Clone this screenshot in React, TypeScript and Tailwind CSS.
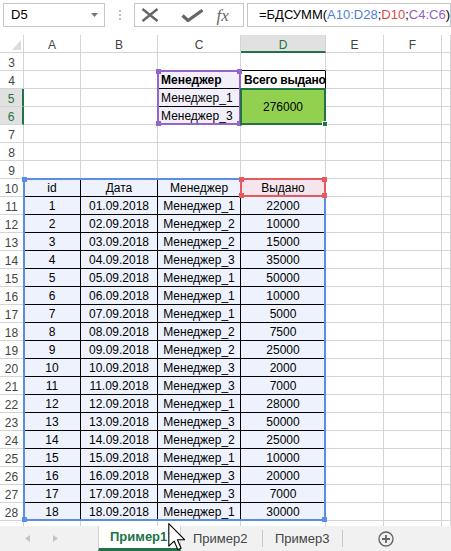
import React from "react";

const rows: [number, string, string, number][] = [
  [1, "01.09.2018", "Менеджер_1", 22000],
  [2, "02.09.2018", "Менеджер_2", 10000],
  [3, "03.09.2018", "Менеджер_2", 15000],
  [4, "04.09.2018", "Менеджер_3", 35000],
  [5, "05.09.2018", "Менеджер_1", 50000],
  [6, "06.09.2018", "Менеджер_1", 10000],
  [7, "07.09.2018", "Менеджер_1", 5000],
  [8, "08.09.2018", "Менеджер_2", 7500],
  [9, "09.09.2018", "Менеджер_2", 25000],
  [10, "10.09.2018", "Менеджер_3", 2000],
  [11, "11.09.2018", "Менеджер_3", 7000],
  [12, "12.09.2018", "Менеджер_1", 28000],
  [13, "13.09.2018", "Менеджер_3", 50000],
  [14, "14.09.2018", "Менеджер_2", 25000],
  [15, "15.09.2018", "Менеджер_1", 10000],
  [16, "16.09.2018", "Менеджер_3", 20000],
  [17, "17.09.2018", "Менеджер_3", 7000],
  [18, "18.09.2018", "Менеджер_1", 30000],
];

const letters = ["A", "B", "C", "D", "E", "F", ""];

const base =
  "border-r border-b px-[3px] pt-[2px] leading-[15px] whitespace-nowrap text-[12px] text-black";

function cellText(r: number, c: number): string {
  if (r >= 10 && r <= 28 && c <= 3) {
    if (r === 10) return ["id", "Дата", "Менеджер", "Выдано"][c];
    const d = rows[r - 11];
    return String(d[c]);
  }
  if (c === 2 && r === 4) return "Менеджер";
  if (c === 2 && r === 5) return "Менеджер_1";
  if (c === 2 && r === 6) return "Менеджер_3";
  if (c === 3 && r === 4) return "Всего выдано";
  return "";
}

function cellClass(r: number, c: number): string {
  if (r >= 10 && r <= 28 && c <= 3) {
    if (r === 10 && c === 3) return base + " border-black bg-[#f5e5ec] text-center";
    return base + " border-black bg-[#edf2fc] text-center";
  }
  if (c === 2 && r === 4) return base + " border-r-[#d4d4d4] border-b-black bg-[#f2eefa] font-bold";
  if (c === 2 && r === 5) return base + " border-r-[#d4d4d4] border-b-black bg-[#f2eefa]";
  if (c === 2 && r === 6) return base + " border-[#d4d4d4] bg-[#f2eefa]";
  if (c === 3 && r === 3) return base + " border-r-[#d4d4d4] border-b-black";
  if (c === 3 && r === 4) return base + " border-black font-bold tracking-[-0.2px]";
  return base + " border-[#d4d4d4]";
}

function Corners({ color }: { color: string }) {
  return (
    <>
      <span className={"absolute -left-[3px] -top-[3px] h-[5px] w-[5px] " + color} />
      <span className={"absolute -right-[3px] -top-[3px] h-[5px] w-[5px] " + color} />
      <span className={"absolute -bottom-[3px] -left-[3px] h-[5px] w-[5px] " + color} />
      <span className={"absolute -bottom-[3px] -right-[3px] h-[5px] w-[5px] " + color} />
    </>
  );
}

function SheetRow({ r }: { r: number }) {
  const selected = r === 5 || r === 6;
  // row 29 is only a sliver above the sheet tabs, its number is hidden
  const label = r === 29 ? "" : String(r);
  const cells: React.ReactNode[] = [];
  cells.push(
    <div
      key="h"
      className={
        selected
          ? "border-b border-b-[#d4d4d4] border-r-2 border-r-[#217346] bg-[#e1e1e1] pt-[3px] text-center text-[12px] leading-[15px] text-[#217346]"
          : "border-r border-b border-[#d4d4d4] pt-[3px] text-center text-[12px] leading-[15px] text-[#444]"
      }
    >
      {label}
    </div>,
  );
  for (let c = 0; c < 7; c++) {
    if (c === 3 && r === 6) continue;
    if (c === 3 && r === 5) {
      cells.push(
        <div
          key={c}
          className="row-span-2 flex items-center justify-center border-r border-b border-[#d4d4d4] bg-[#92d050] text-[12px] text-black"
        >
          276000
        </div>,
      );
      continue;
    }
    cells.push(
      <div key={c} className={cellClass(r, c)}>
        {cellText(r, c)}
      </div>,
    );
  }
  return <>{cells}</>;
}

function FormulaBar() {
  return (
    <div className="flex h-[35px] items-start pl-[3px] pt-[3px]">
      <div className="relative flex h-[24px] w-[102px] items-center border border-[#c6c6c6] pl-[7px] text-[13px] text-black">
        D5
        <svg className="absolute right-[6px] top-[9px]" width="7" height="4" viewBox="0 0 7 4">
          <path d="M0 0h7L3.5 4z" fill="#777" />
        </svg>
      </div>
      <div className="flex h-[24px] w-[30px] flex-col items-center justify-center gap-[2px]">
        <span className="h-[2px] w-[2px] bg-[#bdbdbd]" />
        <span className="h-[2px] w-[2px] bg-[#bdbdbd]" />
        <span className="h-[2px] w-[2px] bg-[#bdbdbd]" />
      </div>
      <div className="flex h-[24px] w-[110px] items-center border border-[#c6c6c6]">
        <svg className="ml-[6px]" width="18" height="14" viewBox="0 0 18 14">
          <path d="M1.5 1 16.5 13M16.5 1 1.5 13" stroke="#666" strokeWidth="2.4" />
        </svg>
        <svg className="ml-[22px]" width="23" height="13" viewBox="0 0 23 13">
          <path d="M1.5 6.5 7 11.5 21.5 1.2" fill="none" stroke="#666" strokeWidth="3.2" />
        </svg>
        <span className="ml-[12px] font-['Liberation_Serif',serif] text-[17px] italic leading-none text-[#666]">
          fx
        </span>
      </div>
      <div className="ml-[3px] flex h-[24px] flex-1 items-center border border-[#c6c6c6] pl-[11px] text-[13px] text-black">
        =БДСУММ(<span className="text-[#4f80d8]">A10:D28</span>;<span className="text-[#e0474c]">D10</span>;
        <span className="text-[#9060c4]">C4:C6</span>)
      </div>
    </div>
  );
}

function SheetTabs() {
  return (
    <div className="flex h-[25px] bg-[#f1f1f1] text-[13px]">
      <div className="flex w-[98px] items-center">
        <svg className="ml-[25px]" width="5" height="7" viewBox="0 0 5 7">
          <path d="M5 0v7L0 3.5z" fill="#c4c4c4" />
        </svg>
        <svg className="ml-[23px]" width="5" height="7" viewBox="0 0 5 7">
          <path d="M0 0v7l5-3.5z" fill="#c4c4c4" />
        </svg>
      </div>
      <div className="flex w-[83px] items-center border-x border-[#d4d4d4] border-b-[3px] border-b-[#217346] bg-white pl-[11px] font-bold text-[#217346]">
        Пример1
      </div>
      <div className="flex w-[81px] items-center pl-[12px] text-[#444]">Пример2</div>
      <div className="my-[4px] w-px bg-[#c6c6c6]" />
      <div className="flex w-[79px] items-center pl-[12px] text-[#444]">Пример3</div>
      <div className="my-[4px] w-px bg-[#c6c6c6]" />
      <div className="ml-[35px] flex items-center">
        <svg width="16" height="16" viewBox="0 0 16 16">
          <circle cx="8" cy="8" r="7" fill="none" stroke="#666" strokeWidth="1.4" />
          <path d="M8 4v8M4 8h8" stroke="#666" strokeWidth="1.8" />
        </svg>
      </div>
    </div>
  );
}

export default function App() {
  const sheetRows: number[] = [];
  for (let r = 3; r <= 29; r++) sheetRows.push(r);

  return (
    <div className="relative h-[551px] w-[451px] overflow-hidden bg-white font-['Liberation_Sans',Arial,sans-serif]">
      <FormulaBar />

      <div className="relative h-[491px] overflow-hidden">
        <div className="grid grid-cols-[24px_57px_77px_83px_85px_58px_58px_1fr] auto-rows-[18px]">
          <div className="relative border-r border-b border-[#d4d4d4]">
            <svg className="absolute bottom-[2px] right-[2px]" width="9" height="10" viewBox="0 0 9 10">
              <path d="M9 0v10H0z" fill="#dcdcdc" />
            </svg>
          </div>
          {letters.map((l, i) =>
            i === 3 ? (
              <div
                key={i}
                className="border-r border-r-[#d4d4d4] border-b-2 border-b-[#217346] bg-[#e1e1e1] pt-[3px] text-center text-[12px] leading-[15px] text-[#217346]"
              >
                {l}
              </div>
            ) : (
              <div
                key={i}
                className="border-r border-b border-[#d4d4d4] pt-[3px] text-center text-[12px] leading-[15px] text-[#444]"
              >
                {l}
              </div>
            ),
          )}
          {sheetRows.map((r) => (
            <SheetRow key={r} r={r} />
          ))}
        </div>

        {/* formula reference highlights */}
        <div className="pointer-events-none absolute left-[23px] top-[143px] h-[343px] w-[303px] border-2 border-[#5b8de6]">
          <Corners color="bg-[#5b8de6]" />
        </div>
        <div className="pointer-events-none absolute left-[157px] top-[35px] h-[55px] w-[84px] border-2 border-[#9466cc]">
          <Corners color="bg-[#9466cc]" />
        </div>
        <div className="pointer-events-none absolute left-[240px] top-[143px] h-[19px] w-[86px] border-2 border-[#e65a5f]">
          <Corners color="bg-[#e65a5f]" />
        </div>
        {/* active selection */}
        <div className="pointer-events-none absolute left-[240px] top-[53px] h-[37px] w-[86px] border-2 border-[#217346]">
          <span className="absolute -bottom-[4px] -right-[4px] h-[6px] w-[6px] border border-white bg-[#217346]" />
        </div>
      </div>

      <SheetTabs />

      <svg className="pointer-events-none absolute left-[168px] top-[523px]" width="17" height="28" viewBox="0 0 12 20">
        <path
          d="M0.5 0.5v16l3.8-3.6 2.6 6.1 2.4-1-2.6-6h5.2z"
          fill="#fff"
          stroke="#000"
          strokeWidth="0.8"
          strokeLinejoin="round"
        />
      </svg>
    </div>
  );
}
